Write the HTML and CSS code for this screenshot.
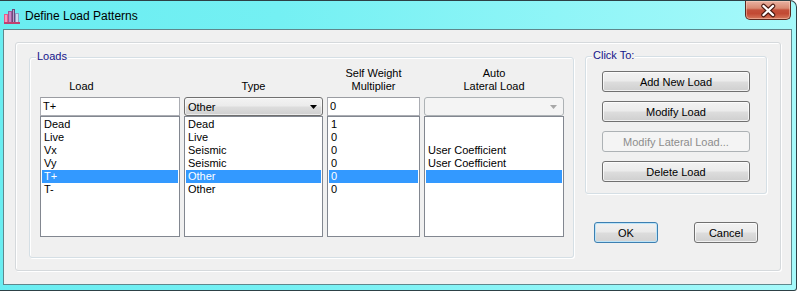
FILE: index.html
```html
<!DOCTYPE html>
<html>
<head>
<meta charset="utf-8">
<title>Define Load Patterns</title>
<link rel="stylesheet" href="styles.css">
</head>
<body>
<div class="window">
  <div class="titlebar">
    <svg class="app-icon" width="16" height="16" viewBox="0 0 16 16">
      <rect x="0" y="6" width="4" height="10" fill="#e85a8c"/>
      <rect x="1" y="7" width="2" height="8" fill="#f49cc0"/>
      <rect x="4" y="3" width="4" height="13" fill="#9a5a9a"/>
      <rect x="5" y="4" width="2" height="11" fill="#c58ac8"/>
      <rect x="8" y="1" width="3" height="15" fill="#6a4a7a"/>
      <rect x="9" y="2" width="1" height="13" fill="#b9a0d0"/>
      <rect x="11" y="5" width="4" height="11" fill="#8aa0c8"/>
      <rect x="12" y="6" width="2" height="9" fill="#d0d8ee"/>
      <rect x="0" y="14" width="16" height="2" fill="#c04070"/>
    </svg>
    <span class="title">Define Load Patterns</span>
    <div class="close" aria-label="Close">
      <svg width="46" height="19" viewBox="0 0 46 19">
        <path d="M18.5 5 L28 14 M28 5 L18.5 14" stroke="#4a1a12" stroke-width="4.5" stroke-linecap="round" fill="none"/>
        <path d="M18.5 5 L28 14 M28 5 L18.5 14" stroke="#ffffff" stroke-width="2.4" stroke-linecap="round" fill="none"/>
      </svg>
    </div>
  </div>
  <div class="client">
    <div class="panel">
      <div class="group loads">
        <span class="group-label">Loads</span>
        <div class="cols">
          <div class="col">
            <div class="col-head col-head-load">Load</div>
            <div class="field">T+</div>
            <div class="list">
              <div class="item">Dead</div>
              <div class="item">Live</div>
              <div class="item">Vx</div>
              <div class="item">Vy</div>
              <div class="item sel">T+</div>
              <div class="item">T-</div>
            </div>
          </div>
          <div class="col">
            <div class="col-head">Type</div>
            <div class="select">
              <span class="select-text">Other</span>
              <svg class="arrow" width="7" height="4" viewBox="0 0 7 4"><path d="M0 0 H7 L3.5 4 Z" fill="#000"/></svg>
            </div>
            <div class="list">
              <div class="item">Dead</div>
              <div class="item">Live</div>
              <div class="item">Seismic</div>
              <div class="item">Seismic</div>
              <div class="item sel">Other</div>
              <div class="item">Other</div>
            </div>
          </div>
          <div class="col">
            <div class="col-head">Self Weight<br>Multiplier</div>
            <div class="field">0</div>
            <div class="list">
              <div class="item">1</div>
              <div class="item">0</div>
              <div class="item">0</div>
              <div class="item">0</div>
              <div class="item sel">0</div>
              <div class="item">0</div>
            </div>
          </div>
          <div class="col">
            <div class="col-head">Auto<br>Lateral Load</div>
            <div class="select select-disabled">
              <span class="select-text"></span>
              <svg class="arrow" width="7" height="4" viewBox="0 0 7 4"><path d="M0 0 H7 L3.5 4 Z" fill="#a7a7a7"/></svg>
            </div>
            <div class="list">
              <div class="item"></div>
              <div class="item"></div>
              <div class="item">User Coefficient</div>
              <div class="item">User Coefficient</div>
              <div class="item sel"></div>
              <div class="item"></div>
            </div>
          </div>
        </div>
      </div>
      <div class="side">
        <div class="group clickto">
          <span class="group-label">Click To:</span>
          <div class="btn">Add New Load</div>
          <div class="btn">Modify Load</div>
          <div class="btn btn-disabled">Modify Lateral Load...</div>
          <div class="btn">Delete Load</div>
        </div>
        <div class="dlg-buttons">
          <div class="btn btn-small btn-default">OK</div>
          <div class="btn btn-small">Cancel</div>
        </div>
      </div>
    </div>
  </div>
</div>
</body>
</html>
```
FILE: styles.css
```css
html, body {
  margin: 0;
  background: #ffffff;
}

body {
  font-family: "Liberation Sans", Arial, sans-serif;
  font-size: 11px;
  color: #000;
}

.window {
  width: 797px;
  height: 291px;
  box-sizing: border-box;
  border: 1px solid #2d4146;
  border-left: none;
  border-radius: 0 7px 3px 0;
  padding: 0 4px 5px 3px;
  background: linear-gradient(90deg, #6aedf1 0%, #74f0f3 35%, #8ff5f7 70%, #a6f9fa 100%);
  display: flex;
  flex-direction: column;
}

.titlebar {
  height: 28px;
  flex: none;
  display: flex;
  align-items: center;
  padding-left: 1px;
}

.app-icon {
  flex: none;
  margin-right: 5px;
  margin-top: 2px;
}

.title {
  font-size: 12px;
  color: #000;
  margin-top: 2px;
}

.close {
  margin-left: auto;
  margin-right: 1px;
  align-self: flex-start;
  width: 46px;
  height: 19px;
  box-sizing: border-box;
  border: 1px solid #5a2a20;
  border-top: none;
  border-radius: 0 0 5px 5px;
  background: linear-gradient(180deg, #e9b2a2 0%, #d98a72 40%, #c4503a 50%, #c24a34 70%, #d6785c 100%);
  box-shadow: inset 0 0 0 1px rgba(255, 220, 200, 0.45);
  display: flex;
  align-items: center;
  justify-content: center;
  overflow: hidden;
}

.close svg {
  flex: none;
}

.client {
  flex: 1;
  border: 1px solid #5f878c;
  background: #f0f0f0;
  padding: 12px 0 0 11px;
}

.panel {
  width: 766px;
  height: 229px;
  box-sizing: border-box;
  border: 1px solid #d5d9dc;
  border-radius: 3px;
  box-shadow: inset 1px 1px 0 #ffffff, 1px 1px 0 #ffffff;
  padding: 14px 13px 0 13px;
  display: flex;
  align-items: flex-start;
}

.group {
  position: relative;
  box-sizing: border-box;
  border: 1px solid #d5dfe5;
  border-radius: 3px;
  box-shadow: inset 1px 1px 0 #ffffff, 1px 1px 0 #ffffff;
}

.group-label {
  position: absolute;
  top: -8px;
  left: 6px;
  padding: 0 1px;
  line-height: 13px;
  background: #f0f0f0;
  color: #14148a;
}

.loads {
  width: 545px;
  height: 201px;
  padding: 9px 0 0 10px;
}

.cols {
  display: grid;
  grid-template-columns: 140px 139px 93px 140px;
  column-gap: 4px;
}

.col {
  display: flex;
  flex-direction: column;
}

.col-head {
  height: 26px;
  margin-bottom: 4px;
  line-height: 13px;
  text-align: center;
  display: flex;
  flex-direction: column;
  justify-content: flex-end;
}

.col-head-load {
  padding-right: 57px;
}

.field {
  height: 19px;
  box-sizing: border-box;
  border: 1px solid #abadb3;
  border-top-color: #9a9ca2;
  background: #ffffff;
  padding-left: 2px;
  line-height: 17px;
}

.select {
  height: 19px;
  box-sizing: border-box;
  border: 1px solid #707070;
  border-radius: 3px;
  background: linear-gradient(180deg, #f3f3f3 0%, #ebebeb 48%, #dddddd 52%, #d0d0d0 100%);
  box-shadow: inset 0 0 0 1px rgba(255, 255, 255, 0.6);
  padding: 0 5px 0 3px;
  display: flex;
  align-items: center;
}

.select-text {
  flex: 1;
}

.select-disabled {
  border-color: #adb2b5;
  background: #f4f4f4;
  box-shadow: none;
  padding-right: 6px;
}

.arrow {
  flex: none;
}

.list {
  height: 121px;
  box-sizing: border-box;
  border: 1px solid #828790;
  background: #ffffff;
  padding: 1px;
}

.item {
  height: 13px;
  line-height: 13px;
  padding-left: 2px;
  white-space: nowrap;
}

.item.sel {
  background: #3399ff;
  color: #ffffff;
}

.side {
  margin-left: 11px;
  margin-top: -1px;
  display: flex;
  flex-direction: column;
}

.clickto {
  width: 182px;
  height: 138px;
  padding: 14px 0 0 16px;
  display: flex;
  flex-direction: column;
  gap: 9px;
}

.btn {
  width: 148px;
  height: 21px;
  box-sizing: border-box;
  border: 1px solid #707070;
  border-radius: 3px;
  background: linear-gradient(180deg, #f2f2f2 0%, #ebebeb 48%, #dddddd 52%, #cfcfcf 100%);
  box-shadow: inset 0 0 0 1px rgba(255, 255, 255, 0.7);
  display: flex;
  align-items: center;
  justify-content: center;
  color: #000;
}

.btn-disabled {
  border-color: #adb2b5;
  background: #f4f4f4;
  box-shadow: none;
  color: #8d8d8d;
}

.dlg-buttons {
  display: flex;
  gap: 36px;
  margin-top: 28px;
  padding-left: 9px;
}

.btn-small {
  width: 64px;
}

.btn-default {
  border-color: #3c7fb1;
  box-shadow: inset 0 0 0 1px #bde4f8;
  background: linear-gradient(180deg, #f1f1f1 0%, #eaeaea 48%, #dcdcdc 52%, #d2d2d2 100%);
}
```
